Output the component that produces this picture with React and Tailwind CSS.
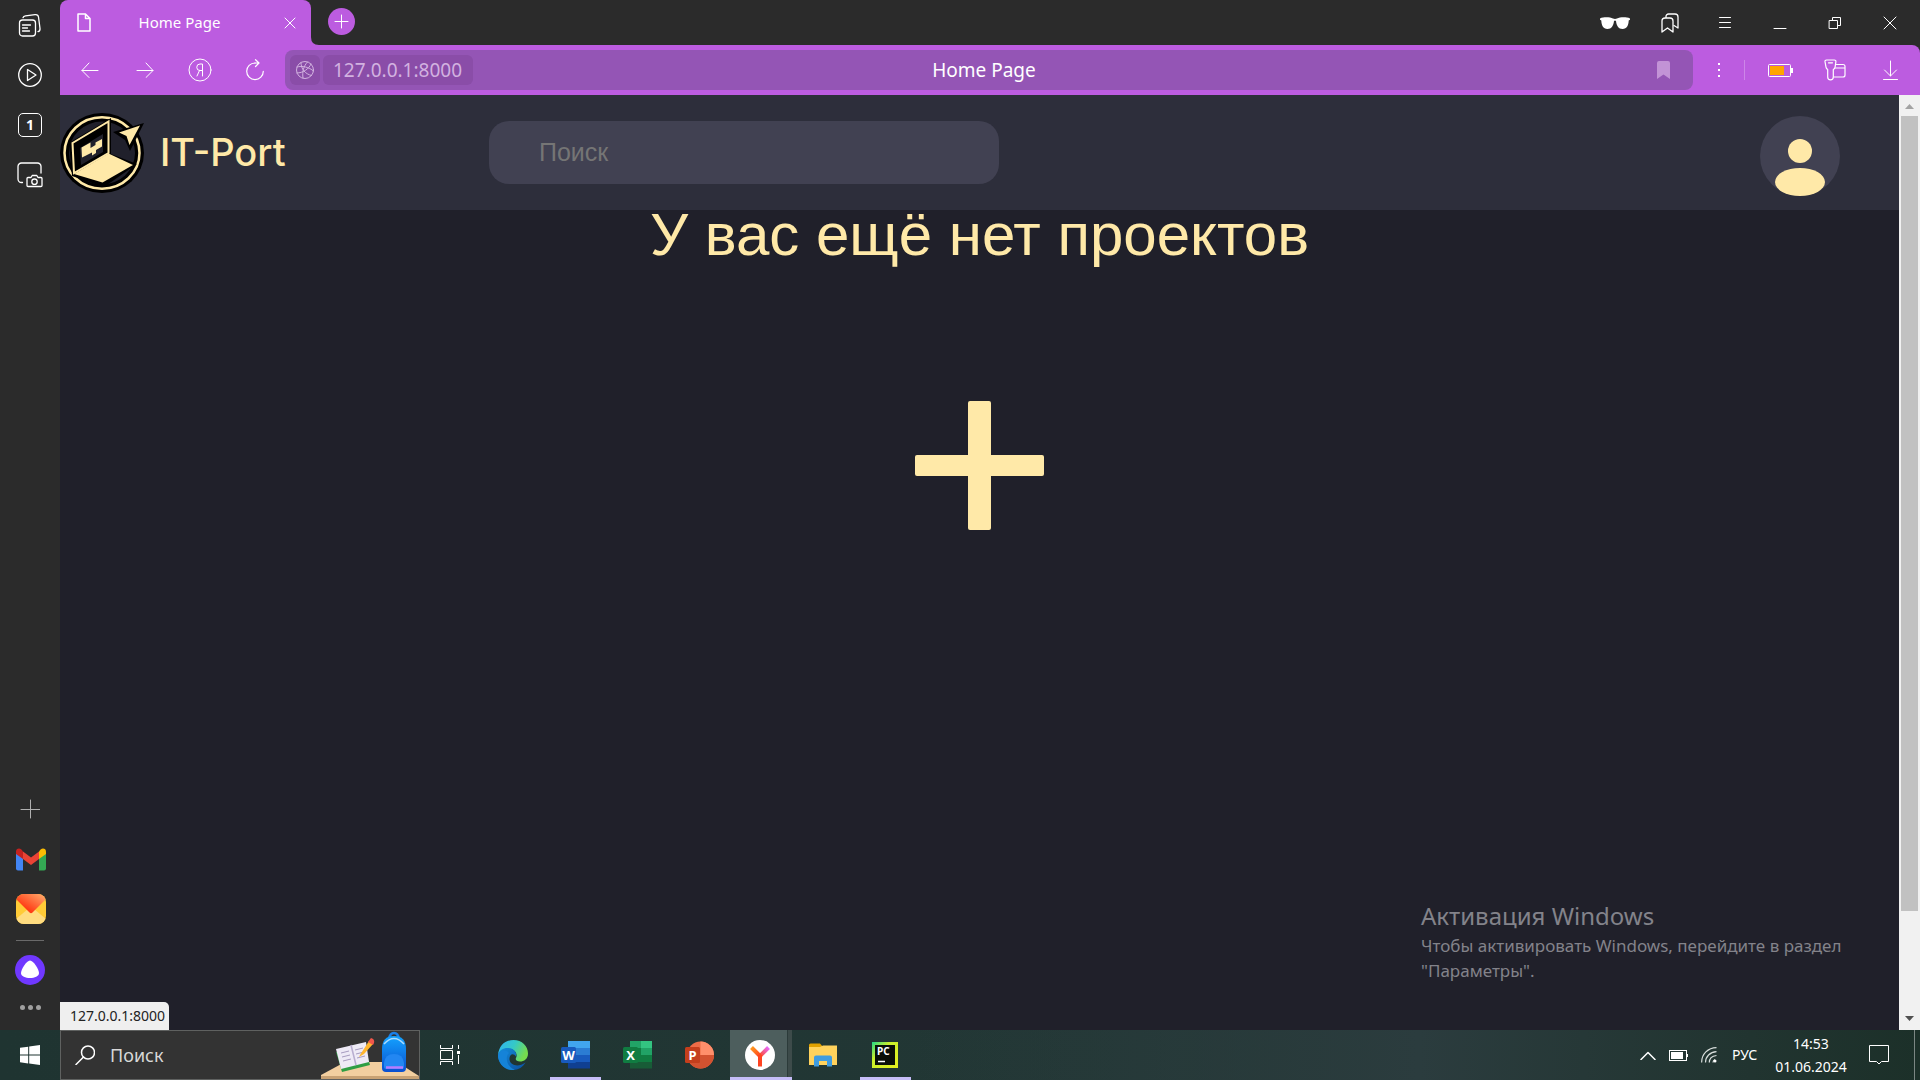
import React from "react";

const NOTO = "font-['Noto_Sans',sans-serif]";

function Line({ w = 24, h = 24, sw = 1, className = "", children }) {
  return (
    <svg
      width={w}
      height={h}
      viewBox={`0 0 ${w} ${h}`}
      fill="none"
      stroke="currentColor"
      strokeWidth={sw}
      strokeLinecap="round"
      strokeLinejoin="round"
      className={`shrink-0 ${className}`}
      aria-hidden="true"
    >
      {children}
    </svg>
  );
}

function SideButton({ label, children }) {
  return (
    <button type="button" aria-label={label} className="flex h-[50px] w-full items-center justify-center text-white">
      {children}
    </button>
  );
}

function Sidebar() {
  return (
    <aside className="flex w-[60px] shrink-0 flex-col bg-[#2b2b2b] pb-[10px]">
      <SideButton label="Коллекции">
        <Line sw={1.3}>
          <rect x="1.500" y="7" width="16" height="16" rx="3" />
          <path d="M4.500 12h8M4.500 15h5M4.500 18h7" />
          <path d="M5 4.700C5.400 3.300 6.300 3 7.500 2.800L17 1.700C19 1.500 20.300 2.300 20.500 4L22 15.500C22.200 17.300 21.500 18.300 20 18.700" />
        </Line>
      </SideButton>
      <SideButton label="Видео">
        <Line sw={1.3}>
          <circle cx="12" cy="12" r="11.300" />
          <path d="M9.500 6.500v11l8.500-5.500z" />
        </Line>
      </SideButton>
      <SideButton label="Вкладки">
        <span className={`flex size-6 items-center justify-center rounded-[5px] border border-white text-sm font-bold leading-none ${NOTO}`}>1</span>
      </SideButton>
      <SideButton label="Снимок экрана">
        <Line w={26} h={26} sw={1.3}>
          <path d="M5.500 20.500H4.500A3.500 3.500 0 0 1 1 17V4.500A3.500 3.500 0 0 1 4.500 1H20.500A3.500 3.500 0 0 1 24 4.500V11" />
          <path d="M11 15.500h3l1.200-2h4.600l1.200 2H24a1 1 0 0 1 1 1V23.500a1 1 0 0 1-1 1H11a1 1 0 0 1-1-1V16.500a1 1 0 0 1 1-1z" />
          <circle cx="17.500" cy="19.700" r="2.700" />
        </Line>
      </SideButton>
      <div className="grow" />
      <SideButton label="Добавить">
        <Line w={20} h={20} className="text-[#b0b0b0]">
          <path d="M10.500 1v18M1 10.500h19" />
        </Line>
      </SideButton>
      <SideButton label="Gmail">
        <svg width="30" height="23" viewBox="0 0 30 23" className="ml-[2px]" aria-hidden="true">
          <path d="M0 5v15.500A2 2 0 0 0 2 22.500H7V10z" fill="#4285f4" />
          <path d="M30 5v15.500a2 2 0 0 1-2 2h-5V10z" fill="#34a853" />
          <path d="M7 3.500V11L15 17l8-6V3.500l-8 6z" fill="#ea4335" />
          <path d="M0 3.500V6l7 5V3.500L5.400 1.500C3 -.5 0 .8 0 3.500z" fill="#c5221f" />
          <path d="M30 3.500V6l-7 5V3.500l1.600-2C27-.5 30 .8 30 3.500z" fill="#fbbc04" />
        </svg>
      </SideButton>
      <SideButton label="Почта">
        <svg width="30" height="30" viewBox="0 0 30 30" className="ml-[2px]" aria-hidden="true">
          <defs>
            <linearGradient id="mailFlap" x1="0" y1="1" x2="1" y2="0">
              <stop offset="0.3" stopColor="#ff3d16" />
              <stop offset="1" stopColor="#ffb070" />
            </linearGradient>
            <clipPath id="mailClip"><rect width="30" height="30" rx="8" /></clipPath>
          </defs>
          <g clipPath="url(#mailClip)">
            <rect width="30" height="30" fill="#ffcb37" />
            <path d="M0 25L12 15h6l12 10v5H0z" fill="#ffdc80" />
            <path d="M0 0h30v5L16.500 18.500q-1.500 1.300-3 0L0 5z" fill="url(#mailFlap)" />
          </g>
        </svg>
      </SideButton>
      <div className="mx-4 mt-[6px] mb-1 h-px bg-[#6a6a6a]" />
      <SideButton label="Алиса">
        <svg width="30" height="30" viewBox="0 0 30 30" aria-hidden="true">
          <circle cx="15" cy="15" r="15" fill="#7038ff" />
          <path d="M15 5.500C18.500 5.500 24 14.500 24 18c0 3.500-4.500 5-9 5s-9-1.500-9-5C6 14.500 11.500 5.500 15 5.500z" fill="#fff" />
        </svg>
      </SideButton>
      <button type="button" aria-label="Ещё" className="flex h-[25px] w-full items-center justify-center gap-[3px]">
        <i className="size-[5px] rounded-full bg-[#a0a0a0]" />
        <i className="size-[5px] rounded-full bg-[#a0a0a0]" />
        <i className="size-[5px] rounded-full bg-[#a0a0a0]" />
      </button>
    </aside>
  );
}

function Cell({ label, children }) {
  return (
    <button type="button" aria-label={label} className="flex h-full w-[55px] shrink-0 items-center justify-center text-white">
      {children}
    </button>
  );
}

function TabStrip() {
  return (
    <div className="flex h-[45px] items-stretch">
      <div className={`relative flex w-[251px] items-center rounded-t-lg bg-[#bc5ce0] text-white ${NOTO}`}>
        <Line w={14} h={20} sw={1.5} className="ml-[17px]">
          <path d="M1 1h7.500L13 5.500V18H1zM8.500 1v4.500H13" />
        </Line>
        <span className="grow text-center text-[15px]">Home Page</span>
        <button type="button" aria-label="Закрыть вкладку" className="mr-[15px] ml-[16px]">
          <Line w={12} h={12}>
            <path d="M1 1l10 10M11 1L1 11" />
          </Line>
        </button>
        <svg width="8" height="8" viewBox="0 0 8 8" className="absolute bottom-0 left-full" aria-hidden="true">
          <path d="M0 0Q0 8 8 8H0z" fill="#bc5ce0" />
        </svg>
      </div>
      <button type="button" aria-label="Новая вкладка" className="mt-2 ml-[17px] flex size-[27px] items-center justify-center rounded-full bg-[#bc5ce0] text-white">
        <Line w={15} h={15}>
          <path d="M7.500 1v13M1 7.500h13" />
        </Line>
      </button>
      <div className="grow" />
      <div className="flex pr-[3px]">
        <Cell label="Режим чтения">
          <svg width="30" height="12" viewBox="0 0 30 12" fill="#fff" aria-hidden="true">
            <path d="M0 1.500C4-.2 10 .2 13 1.500q2 .8 4 0C20 .2 26-.2 30 1.500v1.200l-1.300.8C28.500 8 27 12 22.500 12c-4 0-6-3.500-6.500-8q-1-.8-2 0c-.5 4.500-2.500 8-6.500 8C3 12 1.500 8 1.300 3.500L0 2.700z" />
          </svg>
        </Cell>
        <Cell label="Закладки">
          <Line w={18} h={20} sw={1.3}>
            <path d="M1 19V8a3 3 0 0 1 3-3H9a3 3 0 0 1 3 3v11l-5.500-4z" />
            <path d="M5 4.500V3.500A2.500 2.500 0 0 1 7.500 1H14A3 3 0 0 1 17 4V15l-4-2.500" />
          </Line>
        </Cell>
        <Cell label="Меню">
          <Line w={12} h={12}>
            <path d="M.5 .5h11M.5 5.500h11M.5 10.500h11" />
          </Line>
        </Cell>
        <Cell label="Свернуть">
          <Line w={14} h={14}>
            <path d="M1 12.500h12" />
          </Line>
        </Cell>
        <Cell label="Восстановить">
          <Line w={14} h={14}>
            <path d="M1.500 4.500h8v8h-8zM4.500 4.500v-3h8v8h-3" />
          </Line>
        </Cell>
        <Cell label="Закрыть">
          <Line w={14} h={14}>
            <path d="M1 1l12 12M13 1L1 13" />
          </Line>
        </Cell>
      </div>
    </div>
  );
}

function Toolbar() {
  return (
    <div className={`flex h-[50px] items-center rounded-tr-lg bg-[#bc5ce0] pl-[2px] text-white ${NOTO}`}>
      <Cell label="Назад">
        <Line w={18} h={16}>
          <path d="M17 8.500H1M8 1L1 8.500L8 15.500" />
        </Line>
      </Cell>
      <Cell label="Вперёд">
        <Line w={18} h={16}>
          <path d="M1 8.500h16M10 1l7 7.500L10 15.500" />
        </Line>
      </Cell>
      <Cell label="Яндекс">
        <Line>
          <circle cx="12" cy="12" r="11" />
          <path d="M14.500 18V6H12a3.200 3.200 0 0 0 0 6.500h2.500M11.500 12.500L9 18" />
        </Line>
      </Cell>
      <Cell label="Обновить">
        <Line w={20} h={22} sw={1.2}>
          <path d="M10 4H14L10.500 .7M14 4L10.500 7.500" />
          <path d="M10 4A8.300 8.300 0 1 0 18.300 12.300" />
        </Line>
      </Cell>
      <div className="relative ml-[3px] flex h-10 grow items-center rounded-lg bg-[#9455b5] px-[5px]">
        <button type="button" aria-label="О сайте" className="flex size-[30px] items-center justify-center rounded-md bg-[#8a4da8] text-[#d2b2e0]">
          <Line w={20} h={20}>
            <circle cx="10" cy="10" r="8.500" />
            <path d="M2 13C8 13 14 9 16 4M6 2.500C6 9 10 14 16.500 15.500M12.500 2C8.500 6 7 12 8 18M2 7c5-1.500 12 0 16.500 4" />
          </Line>
        </button>
        <input
          aria-label="Адрес"
          defaultValue="127.0.0.1:8000"
          className="ml-[3px] h-[30px] w-[150px] rounded-md bg-[#8a4da8] px-[10px] text-[19px] leading-[30px] text-[#d2b2e0] outline-none"
        />
        <span className="pointer-events-none absolute right-[10px] left-0 text-center text-[19px] leading-[30px]">Home Page</span>
        <button type="button" aria-label="В закладки" className="mr-[18px] ml-auto">
          <svg width="13" height="18" viewBox="0 0 13 18" aria-hidden="true">
            <path d="M0 18V2a2 2 0 0 1 2-2h9a2 2 0 0 1 2 2v16l-6.500-4.500z" fill="#c293d6" />
          </svg>
        </button>
      </div>
      <button type="button" aria-label="Ещё" className="flex h-full w-[51px] flex-col items-center justify-center gap-1">
        <i className="size-[2px] bg-white" />
        <i className="size-[2px] bg-white" />
        <i className="size-[2px] bg-white" />
      </button>
      <div className="h-5 w-px bg-[#cd86e8]" />
      <div className="flex h-full pr-[2px] pl-[8px]">
        <Cell label="Батарея">
          <svg width="25" height="13" viewBox="0 0 25 13" aria-hidden="true">
            <rect x=".5" y=".5" width="22" height="12" rx="1" fill="none" stroke="#fff" />
            <path d="M2 2h14v9H2z" fill="#ffa500" />
            <path d="M23 4h2v5h-2z" fill="#fff" />
          </svg>
        </Cell>
        <Cell label="Пароли">
          <Line w={24} h={22} sw={1.2}>
            <path d="M2.500 1h7.800a1.500 1.500 0 0 1 1.600 1.700l-.8 5.500a3 3 0 0 1-1.800 2.300V18a2.800 2.800 0 0 1-5.600 0V10.500A3 3 0 0 1 2 8.200L1 2.700A1.500 1.500 0 0 1 2.500 1zM4.500 3.800H8.500" />
            <path d="M12.500 5.500h6.500a2 2 0 0 1 2 2V16a2 2 0 0 1-2 2H10M11.500 9H21" />
          </Line>
        </Cell>
        <Cell label="Загрузки">
          <Line w={16} h={20}>
            <path d="M7.500 1v15M1.500 10l6 6 6-6M.5 19.500h14" />
          </Line>
        </Cell>
      </div>
    </div>
  );
}

function Logo() {
  return (
    <svg width="84" height="82" viewBox="0 0 84 82" className="shrink-0" aria-hidden="true">
      <ellipse cx="42" cy="41" rx="42" ry="40" fill="#000" />
      <ellipse cx="42" cy="41" rx="37.500" ry="35.700" fill="#000" stroke="#ffe9a8" strokeWidth="2.500" />
      <ellipse cx="42" cy="41" rx="33" ry="31.500" fill="#20202b" />
      <path d="M9 31L51 6V42L77 52L44 75L12 64z" fill="#000" />
      <path d="M12.500 31L48.500 9.500V41L14 61z" fill="#000" stroke="#ffe9a8" strokeWidth="2" />
      <path d="M20 36L43 22V40L21 53z" fill="#20202b" />
      <path d="M21.500 35.500L30.500 30.500V36L35.500 33V30.500L42 27V34.500L36 38V41L32 43.500V40.500L22 45.500z" fill="#ffe9a8" />
      <path d="M14 62L48.500 41.500L73 53L42.500 70.500z" fill="#ffe9a8" />
      <path d="M53 20L84 11L70 39L65 28z" fill="#000" />
      <path d="M59 20.500L80 13.500L69.500 33L66.500 24z" fill="#ffe9a8" />
    </svg>
  );
}

function SiteHeader() {
  return (
    <header className="flex h-[115px] items-center bg-[#2d2e3b] pr-[59px]">
      <a href="#" className="flex w-[429px] items-center gap-4 text-[38px] font-medium text-[#ffe9a8] font-['Inter',sans-serif]">
        <Logo />
        <span>IT-Port</span>
      </a>
      <input
        type="search"
        aria-label="Поиск"
        placeholder="Поиск"
        className="h-[63px] w-[510px] rounded-[20px] bg-[#414152] px-[50px] font-['Liberation_Sans',sans-serif] text-[25px] text-white outline-none placeholder:text-[#757575]"
      />
      <div className="grow" />
      <button type="button" aria-label="Профиль" className="mt-[7px] size-20 rounded-full bg-[#414152]">
        <svg width="80" height="80" viewBox="0 0 80 80" fill="#ffe9a8" aria-hidden="true">
          <circle cx="40" cy="35" r="12" />
          <ellipse cx="40" cy="66" rx="25" ry="14" />
        </svg>
      </button>
    </header>
  );
}

function ScrollBar() {
  return (
    <div className="flex w-[21px] shrink-0 flex-col items-center bg-[#f1f1f1]" aria-hidden="true">
      <svg width="21" height="21" viewBox="0 0 21 21"><path d="M6 14L10.500 9L15 14z" fill="#a3a3a3" /></svg>
      <div className="w-[17px] grow">
        <div className="h-[89%] bg-[#c1c1c1]" />
      </div>
      <svg width="21" height="21" viewBox="0 0 21 21"><path d="M6 7L10.500 12L15 7z" fill="#505050" /></svg>
    </div>
  );
}

function Page() {
  return (
    <div className="flex grow">
      <main className="relative flex grow flex-col bg-[#20202a]">
        <SiteHeader />
        <h1 className="text-center font-['Liberation_Sans',sans-serif] text-[60px] leading-[50px] text-[#ffe9a8]">У вас ещё нет проектов</h1>
        <button type="button" aria-label="Создать проект" className="mx-auto mt-[141px]">
          <svg width="129" height="129" viewBox="0 0 129 129" fill="#ffe9a8" aria-hidden="true">
            <rect x="53" width="23" height="129" rx="2" />
            <rect y="54" width="129" height="21" rx="2" />
          </svg>
        </button>
        <div className={`absolute right-[48px] bottom-[47px] w-[430px] text-[#83838a] ${NOTO}`}>
          <p className="text-[24px] leading-[34px]">Активация Windows</p>
          <p className="text-[17px] leading-[25px]">
            Чтобы активировать Windows, перейдите в раздел
            <br />
            "Параметры".
          </p>
        </div>
        <div className={`absolute bottom-0 left-0 h-7 rounded-tr-[5px] bg-[#efefef] pr-[4px] pl-[10px] text-sm leading-7 text-[#222] ${NOTO}`}>127.0.0.1:8000</div>
      </main>
      <ScrollBar />
    </div>
  );
}

function TaskSlot({ label, open, active, children }) {
  return (
    <button type="button" aria-label={label} className="flex h-full w-[62px] justify-center">
      {active ? (
        <span className="flex h-full w-full border-b-[3px] border-[#c6bdf8]">
          <span className="flex w-[57px] items-center justify-center bg-[#4d5e5d] pt-[3px] pl-[3px]">{children}</span>
          <span className="w-[5px] border-l border-[#2c3b3a] bg-[#3d4b4a]" />
        </span>
      ) : (
        <span className={`flex h-full w-[51px] items-center justify-center border-b-[3px] pt-[3px] ${open ? "border-[#c6bdf8]" : "border-transparent"}`}>
          {children}
        </span>
      )}
    </button>
  );
}

function OfficeLetter({ children, fill }) {
  return (
    <>
      <rect x="0" y="6" width="15" height="16" rx="1.500" fill={fill} />
      <text x="7.500" y="18.500" textAnchor="middle" fill="#fff" fontSize="13" fontWeight="700" fontFamily="Noto Sans, sans-serif">{children}</text>
    </>
  );
}

function SearchArt() {
  return (
    <svg width="98" height="48" viewBox="0 0 98 48" className="self-end" aria-hidden="true">
      <defs>
        <linearGradient id="bag" x1="0" y1="0" x2="0" y2="1">
          <stop offset="0" stopColor="#14a3ff" />
          <stop offset="1" stopColor="#0a4fd0" />
        </linearGradient>
      </defs>
      <path d="M24 31H76L98 45V48H0V44z" fill="#f3cfa0" />
      <path d="M0 45h98v3H0z" fill="#c9a274" />
      <path d="M15 21L21 41L49 34L47 27z" fill="#2f9e44" />
      <path d="M15 18L45 11L48 31L20 38z" fill="#eeeaf6" />
      <path d="M30 14L35 34" stroke="#b9aed0" strokeWidth="1.500" />
      <path d="M20 22l8-2M21 26l8-2M22 30l8-2M34 19l8-2M35 23l8-2M36 27l8-2" stroke="#a79cc0" />
      <path d="M39 24L48 10L52 13L43 23L38 26z" fill="#ffb52e" />
      <path d="M47 11L50 7Q54 8 53 12L52 14z" fill="#f2574b" />
      <path d="M68 8Q69 2 73 2T78 8" stroke="#1b7fe8" strokeWidth="2.500" fill="none" />
      <path d="M61 37V18Q61 5 73 5T85 18V37Q85 41 81 41H65Q61 41 61 37z" fill="url(#bag)" />
      <path d="M63 13Q73 2 83 13" stroke="#a9dcff" strokeWidth="1.500" fill="none" />
      <path d="M63 36V32Q64 23 73 23T83 32V36Q83 38 81 38H65Q63 38 63 36z" fill="#2387f2" />
      <path d="M65 36.500H82" stroke="#b77bff" strokeWidth="2.500" />
    </svg>
  );
}

function Taskbar() {
  return (
    <footer className={`flex h-[50px] items-stretch bg-linear-to-r from-[#1f3431] via-[#223735] via-60% to-[#1c3029] text-white ${NOTO}`}>
      <button type="button" aria-label="Пуск" className="flex w-[60px] items-center justify-center">
        <svg width="20" height="20" viewBox="0 0 20 20" fill="#fff" aria-hidden="true">
          <path d="M0 2.800L8.200 1.700V9.500H0zM9.200 1.500L20 0V9.500H9.200zM0 10.500h8.200v7.900L0 17.300zM9.200 10.500H20V20L9.200 18.500z" />
        </svg>
      </button>
      <label className="flex w-[360px] items-center border border-[#5f6160] bg-[#333333] pl-[14px]">
        <Line w={20} h={20} sw={1.500}>
          <circle cx="13" cy="7.500" r="6.500" />
          <path d="M8.500 12L1 19.500" />
        </Line>
        <input aria-label="Поиск в Windows" placeholder="Поиск" className="w-0 grow bg-transparent pl-[15px] text-[18px] outline-none placeholder:text-[#d8d8d8]" />
        <SearchArt />
      </label>
      <button type="button" aria-label="Представление задач" className="flex w-[62px] items-center pl-5">
        <svg width="20" height="20" viewBox="0 0 20 20" stroke="#fff" fill="none" aria-hidden="true">
          <path d="M.5 0v3.500h12V0M.5 20v-3.500h12V20M.5 5.500h12v9H.5zM18.500 0v4M18.500 10v9" />
          <path d="M17 6h3v3h-3z" fill="#fff" stroke="none" />
        </svg>
      </button>
      <TaskSlot label="Edge">
        <svg width="30" height="30" viewBox="0 0 30 30" aria-hidden="true">
          <defs>
            <linearGradient id="edgeTop" x1="0" y1="0" x2="1" y2="0.4">
              <stop offset="0" stopColor="#2fb1f5" />
              <stop offset="0.55" stopColor="#35c9c6" />
              <stop offset="1" stopColor="#76dc4e" />
            </linearGradient>
            <linearGradient id="edgeLow" x1="0" y1="0" x2="1" y2="1">
              <stop offset="0" stopColor="#148edc" />
              <stop offset="1" stopColor="#0b4f9f" />
            </linearGradient>
          </defs>
          <path d="M0 15C1 5.500 7 0 15.500 0C24 0 30 6 30 13.500C30 19 26 21.500 22 21.500C19 21.500 17 20 18 18C20 14 17 9 11 9C5 9 1 12 0 15z" fill="url(#edgeTop)" />
          <path d="M0 15C1 10 6 7.500 10.500 8C16.500 8.500 19 13 18 16.500C15 12 11 15 11.500 19.500C12 25 20 28 27.500 22.500C25 27 20.500 30 15 30C6.500 30 0 23.500 0 15z" fill="url(#edgeLow)" />
          <path d="M11 13C7 16 8 27 17 29.800C8 31.500 0 24 0 15C2 10 8 9 11 13z" fill="#1583d8" />
        </svg>
      </TaskSlot>
      <TaskSlot label="Word" open>
        <svg width="29" height="28" viewBox="0 0 29 28" aria-hidden="true">
          <path d="M7 0h22v7H7z" fill="#41a5ee" />
          <path d="M7 7h22v7H7z" fill="#2b7cd3" />
          <path d="M7 14h22v7H7z" fill="#185abd" />
          <path d="M7 21h22v6.500H7z" fill="#103f91" />
          <OfficeLetter fill="#185abd">W</OfficeLetter>
        </svg>
      </TaskSlot>
      <TaskSlot label="Excel">
        <svg width="29" height="28" viewBox="0 0 29 28" aria-hidden="true">
          <path d="M7 0h11v7H7z" fill="#21a366" />
          <path d="M18 0h11v7H18z" fill="#33c481" />
          <path d="M7 7h11v14H7z" fill="#107c41" />
          <path d="M18 7h11v7H18z" fill="#21a366" />
          <path d="M18 14h11v7H18z" fill="#107c41" />
          <path d="M7 21h22v6.500H7z" fill="#185c37" />
          <OfficeLetter fill="#107c41">X</OfficeLetter>
        </svg>
      </TaskSlot>
      <TaskSlot label="PowerPoint">
        <svg width="29" height="28" viewBox="0 0 29 28" aria-hidden="true">
          <circle cx="15.500" cy="14" r="13.500" fill="#ed6c47" />
          <path d="M15.500.5A13.500 13.500 0 0 1 29 14H15.500z" fill="#ff8f6b" />
          <path d="M2 14h27a13.500 13.500 0 0 1-27 0z" fill="#d35230" />
          <OfficeLetter fill="#c43e1c">P</OfficeLetter>
        </svg>
      </TaskSlot>
      <TaskSlot label="Яндекс Браузер" active>
        <svg width="30" height="30" viewBox="0 0 30 30" fill="none" strokeWidth="4" aria-hidden="true">
          <defs>
            <linearGradient id="yaArm" x1="0" y1="1" x2="1" y2="0">
              <stop offset="0" stopColor="#ff4b23" />
              <stop offset="1" stopColor="#e66bff" />
            </linearGradient>
            <linearGradient id="yaLeft" x1="0" y1="0" x2="1" y2="1">
              <stop offset="0" stopColor="#ff9a1f" />
              <stop offset="1" stopColor="#ff4422" />
            </linearGradient>
          </defs>
          <circle cx="15" cy="15" r="15" fill="#fff" />
          <path d="M15 16L23.500 7.500" stroke="url(#yaArm)" />
          <path d="M6.500 7.500L15 16" stroke="url(#yaLeft)" />
          <path d="M15 15V26.500" stroke="#ff4422" />
        </svg>
      </TaskSlot>
      <TaskSlot label="Проводник">
        <svg width="28" height="24" viewBox="0 0 28 24" aria-hidden="true">
          <path d="M0 2a1.500 1.500 0 0 1 1.500-1.500H11L14 4H0z" fill="#e0a100" />
          <path d="M0 4H11L14 2.500H28V22H0z" fill="#ffd25c" />
          <path d="M5 23.500V14.500A2 2 0 0 1 7 12.500H21a2 2 0 0 1 2 2V23.500H18V18H10V23.500z" fill="#3f9ce0" />
        </svg>
      </TaskSlot>
      <TaskSlot label="PyCharm" open>
        <svg width="26" height="26" viewBox="0 0 26 26" aria-hidden="true">
          <defs>
            <linearGradient id="pc" x1="0" y1="0" x2="1" y2="1">
              <stop offset="0" stopColor="#21d789" />
              <stop offset="0.35" stopColor="#c8f02c" />
              <stop offset="1" stopColor="#e6ee1e" />
            </linearGradient>
          </defs>
          <path d="M0 0H26V26H0z" fill="url(#pc)" />
          <path d="M3 3H23V23H3z" fill="#0a0f08" />
          <path d="M6 19.500h7" stroke="#fff" strokeWidth="1.500" />
          <text x="5" y="13" fill="#fff" fontSize="10" fontWeight="700" fontFamily="Noto Sans, sans-serif">PC</text>
        </svg>
      </TaskSlot>
      <div className="flex grow items-center justify-end bg-linear-to-r from-transparent via-[#2b3c3e] via-50% to-[#1c3029]">
        <button type="button" aria-label="Показать скрытые значки" className="mr-[13px]">
          <Line w={16} h={9} sw={1.500}><path d="M1 8.500L8 1.500L15 8.500" /></Line>
        </button>
        <svg width="19" height="11" viewBox="0 0 19 11" className="mr-[13px]" aria-hidden="true">
          <rect x=".5" y=".5" width="17" height="10" fill="none" stroke="#fff" />
          <path d="M2 2h12v7H2zM18 4h1v3h-1z" fill="#fff" />
        </svg>
        <svg width="16" height="16" viewBox="0 0 16 16" fill="none" stroke="#d8dedc" strokeWidth="1.200" className="mr-[15px]" aria-hidden="true">
          <path d="M.6 15.500C.6 7 7 .8 15.500.6M4.500 15.500C4.500 9.500 9 5 15.500 4.700M8.300 15.500C8.300 11.500 11 9 15.500 8.500" />
          <path d="M12 15.500q0-2 2-3" />
          <circle cx="14" cy="14" r="1.500" fill="#fff" stroke="none" />
        </svg>
        <span className="w-7 text-sm">РУС</span>
        <time className="ml-[14px] w-[74px] text-center text-sm leading-[23px]">
          14:53
          <br />
          01.06.2024
        </time>
        <button type="button" aria-label="Уведомления" className="ml-[21px] mr-[25px]">
          <svg width="20" height="20" viewBox="0 0 20 20" fill="none" stroke="#fff" aria-hidden="true">
            <path d="M.5.5h19v16h-7l-2.500 2.500-2.500-2.500h-7z" />
          </svg>
        </button>
        <div className="mr-[5px] h-full w-px bg-[#7b8683]" />
      </div>
    </footer>
  );
}

export default function App() {
  return (
    <div className="flex min-h-screen w-full flex-col bg-[#2b2b2b]">
      <div className="flex grow">
        <Sidebar />
        <div className="flex min-w-0 grow flex-col">
          <TabStrip />
          <Toolbar />
          <Page />
        </div>
      </div>
      <Taskbar />
    </div>
  );
}
